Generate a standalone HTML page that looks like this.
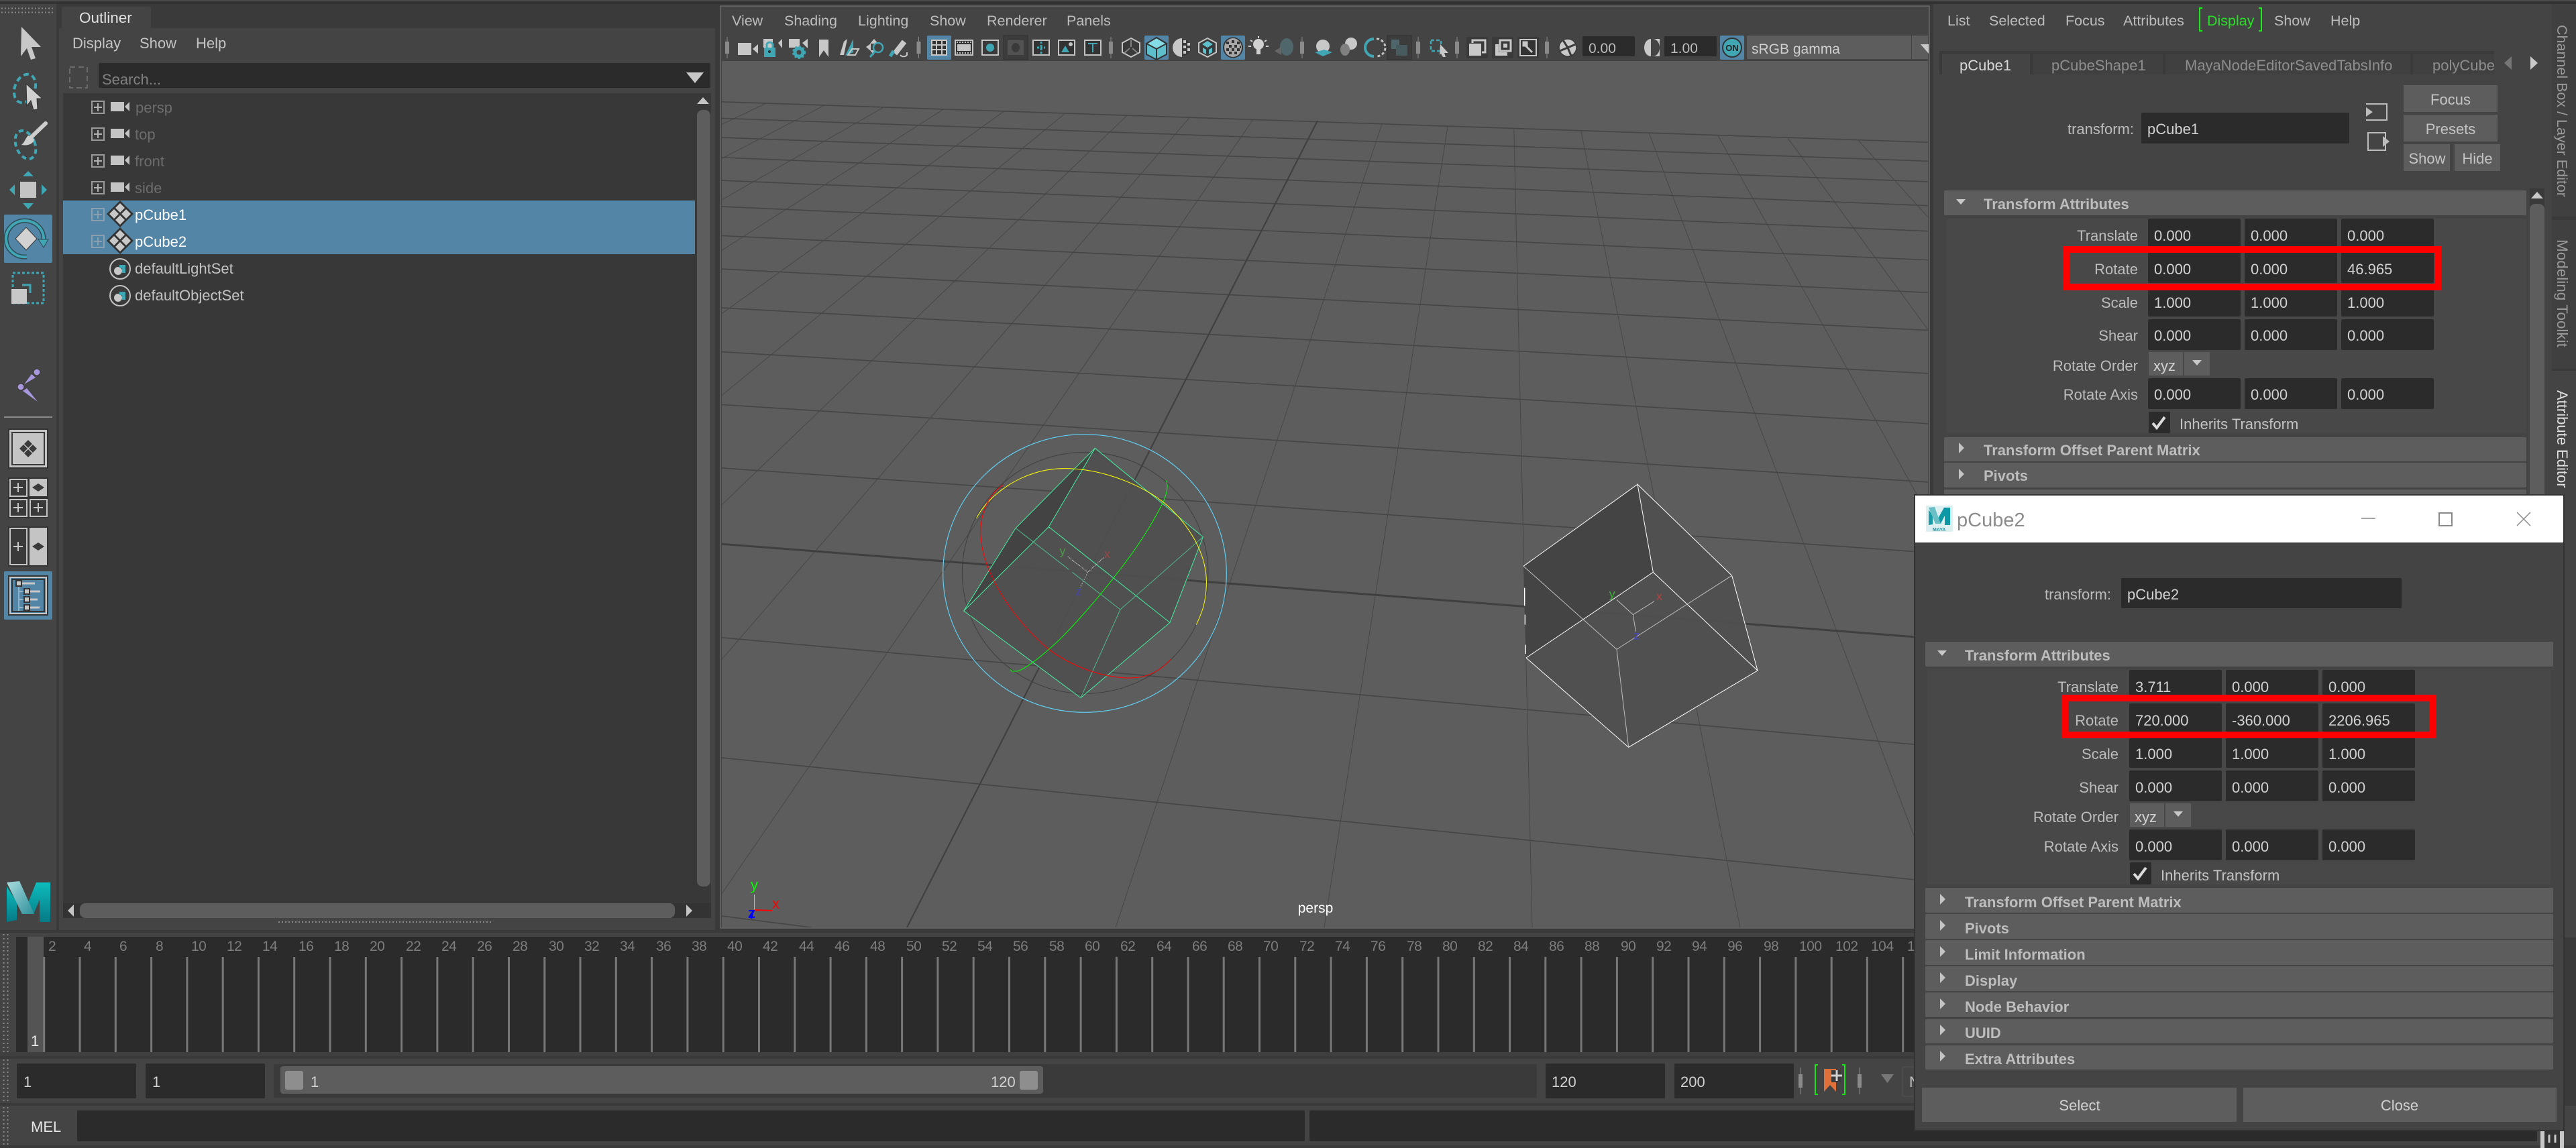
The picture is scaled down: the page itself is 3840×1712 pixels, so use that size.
<!DOCTYPE html>
<html><head><meta charset="utf-8"><title>Maya</title>
<style>
html,body{margin:0;padding:0;background:#3a3a3a;width:3840px;height:1712px;overflow:hidden}
svg{display:block}
text{font-family:"Liberation Sans",sans-serif;font-size:22px;fill:#c4c4c4}
.b{font-weight:bold;fill:#bdbdbd}
.l{text-anchor:end;fill:#bcbcbc}
.v{fill:#d2d2d2}
.d{fill:#6c6c6c}
.m{fill:#bdbdbd;font-size:21.5px}
.t{font-size:21px;letter-spacing:-.5px;fill:#7d7d7d}
.c{text-anchor:middle}
</style></head><body>
<svg width="3840" height="1712" viewBox="0 0 3840 1712" xmlns="http://www.w3.org/2000/svg">
<defs>
<g id="plus"><rect x="1" y="1" width="18" height="18" fill="none" stroke="#9a9a9a" stroke-width="2"/><path d="M10 4v12M4 10h12" stroke="#b0b0b0" stroke-width="2"/></g>
<g id="plusd"><rect x="1" y="1" width="18" height="18" fill="none" stroke="#8aa0b0" stroke-width="2"/><path d="M10 4v12M4 10h12" stroke="#8aa0b0" stroke-width="2"/></g>
<g id="cam"><rect x="0" y="0" width="20" height="14" fill="#c4c4c4"/><path d="M21 7L28 0V14Z" fill="#c4c4c4"/></g>
<g id="dia"><path d="M0 -20L20 0L0 20L-20 0Z" fill="#333"/><path d="M0 -16L7 -9L0 -2L-7 -9ZM0 16L7 9L0 2L-7 9ZM-16 0L-9 -7L-2 0L-9 7ZM16 0L9 -7L2 0L9 7Z" fill="#c8c8c8"/></g>
<g id="setic"><circle r="15" fill="#3a3a3a" stroke="#c4c4c4" stroke-width="2"/><circle cx="-3" cy="3" r="6" fill="#c8c8c8"/><path d="M-1 -6H8V6H3V-1H-1Z" fill="#41a6b4"/></g>
<path id="tr" d="M0 0L8 8L0 16Z" fill="#c4c4c4"/>
<path id="td" d="M0 0H14L7 8Z" fill="#c8c8c8"/>
<g id="sep"><path d="M0 0V32" stroke="#8a8a8a" stroke-width="1"/><rect x="-3" y="7" width="6" height="18" fill="#8a8a8a"/></g>
<linearGradient id="mg" x1="0" y1="0" x2="1" y2="1"><stop offset="0" stop-color="#a9dde0"/><stop offset="1" stop-color="#2e8f9a"/></linearGradient>
<linearGradient id="mg2" x1="0" y1="0" x2="0" y2="1"><stop offset="0" stop-color="#0cbcbc"/><stop offset="1" stop-color="#067a86"/></linearGradient>
<clipPath id="gridclip"><path d="M1074 151.7L2875 212V1383H1074Z"/></clipPath>
<clipPath id="vp"><rect x="1076" y="91" width="1798" height="1292"/></clipPath>
</defs>

<!-- base chrome -->
<rect width="3840" height="1712" fill="#3a3a3a"/>
<rect width="3840" height="2" fill="#4a4a4a"/>
<rect y="2" width="3840" height="4" fill="#333"/>

<!-- left toolbox -->
<rect x="0" y="6" width="84" height="1381" fill="#444"/>
<path d="M2 12.5H80M2 18.5H80" stroke="#8a8a8a" stroke-width="2" stroke-dasharray="2 3"/>
<path d="M32 40L61 70H47L53 87L46 89L40 72L31 84Z" fill="#c8c8c8"/>
<ellipse cx="37" cy="132" rx="15" ry="22" transform="rotate(20 37 132)" fill="none" stroke="#41a6b4" stroke-width="4" stroke-dasharray="8 5"/>
<path d="M39 125L63 147H55L56 163L50 164L46 150L40 158Z" fill="#d0d0d0" stroke="#333"/>
<ellipse cx="38" cy="216" rx="14" ry="22" transform="rotate(-22 38 216)" fill="none" stroke="#41a6b4" stroke-width="4" stroke-dasharray="7 5"/>
<path d="M68 184L46 205" stroke="#cfcfcf" stroke-width="6" stroke-linecap="round"/>
<path d="M42 202L51 208C50 214 42 218 32 216C37 212 38 206 42 202Z" fill="#cfcfcf"/>
<rect x="30" y="271" width="24" height="24" fill="#c4c4c4"/>
<path d="M42 255L50 263H34ZM42 312L50 303H34ZM14 283L22 275V291ZM70 283L62 275V291Z" fill="#41a6b4"/>
<rect x="6" y="320" width="72" height="72" rx="2" fill="#5285a6"/>
<path d="M40 383A28 27 0 1 1 65 357" fill="none" stroke="#2f4a55" stroke-width="7"/>
<path d="M40 383A28 27 0 1 1 65 357" fill="none" stroke="#41a6b4" stroke-width="4"/>
<path d="M39 339L55 356L39 373L23 356Z" fill="#d2d2d2" stroke="#3a3a3a"/>
<path d="M57 357H72L65 369Z" fill="#41a6b4" stroke="#2f4a55"/>
<rect x="19" y="407" width="46" height="45" fill="none" stroke="#41a6b4" stroke-width="3" stroke-dasharray="4 3"/>
<rect x="17" y="431" width="23" height="22" fill="#c8c8c8"/>
<path d="M33 425H45V437" fill="none" stroke="#41a6b4" stroke-width="3"/>
<!-- purple -->
<circle cx="55" cy="555" r="5" fill="#a897dd" stroke="#333"/><circle cx="31" cy="577" r="5" fill="#a897dd" stroke="#333"/>
<path d="M36 573L47 558L53 563ZM34 583L40 579L56 599Z" fill="#a897dd"/>
<rect x="6" y="621" width="72" height="2" fill="#8a8a8a"/>
<rect x="12" y="639" width="60" height="60" fill="#333"/><rect x="14" y="641" width="56" height="56" fill="#c4c4c4"/><rect x="18" y="645" width="48" height="48" fill="#c4c4c4" stroke="#3a3a3a" stroke-width="2"/>
<path d="M42 655L49 662L42 669L35 662ZM42 683L49 676L42 669L35 676ZM28 669L35 662L42 669L35 676ZM56 669L49 662L42 669L49 676Z" fill="#3a3a3a" stroke="#c4c4c4" stroke-width="1.500"/>
<rect x="12" y="712" width="60" height="60" fill="#333"/>
<g fill="#3a3a3a" stroke="#c4c4c4" stroke-width="2"><rect x="15" y="715" width="25" height="25"/><rect x="15" y="745" width="25" height="25"/><rect x="45" y="745" width="25" height="25"/></g>
<rect x="44" y="714" width="26" height="26" fill="#c4c4c4"/>
<path d="M57 721L66 727L57 733L48 727Z" fill="#3a3a3a"/>
<path d="M27 720v14M20 727h14M27 750v14M20 757h14M57 750v14M50 757h14" stroke="#c8c8c8" stroke-width="2"/>
<rect x="12" y="785" width="60" height="60" fill="#333"/>
<rect x="15" y="788" width="25" height="54" fill="#3a3a3a" stroke="#c4c4c4" stroke-width="2"/>
<rect x="44" y="787" width="26" height="56" fill="#c4c4c4"/>
<path d="M57 809L66 815L57 821L48 815Z" fill="#3a3a3a"/>
<path d="M27 808v14M20 815h14" stroke="#c8c8c8" stroke-width="2"/>
<rect x="6" y="852" width="72" height="72" rx="2" fill="#5285a6"/>
<rect x="13" y="859" width="58" height="58" fill="none" stroke="#333" stroke-width="2"/>
<rect x="15" y="861" width="54" height="54" fill="none" stroke="#c8c8c8" stroke-width="2"/>
<rect x="18" y="864" width="48" height="48" fill="none" stroke="#333" stroke-width="2"/>
<path d="M28 875V911M28 882H36M28 894H36M28 906H36" stroke="#8fb2c8" stroke-width="2"/>
<g fill="#c8c8c8" stroke="#333" stroke-width="2"><rect x="24" y="866" width="8" height="8"/><rect x="36" y="878" width="8" height="8"/><rect x="36" y="890" width="8" height="8"/><rect x="36" y="902" width="8" height="8"/></g>
<path d="M33 870H52M45 882H60M45 894H56M45 906H59" stroke="#c8c8c8" stroke-width="3"/>
<!-- M logo -->
<path d="M54 1316H75V1375H59V1342L50 1363L42 1346Z" fill="url(#mg2)"/>
<path d="M10 1322L25 1345V1372L10 1375Z" fill="url(#mg2)"/>
<path d="M10 1316L29 1314L51 1363H33Z" fill="url(#mg)"/>

<!-- outliner -->
<rect x="92" y="10" width="133" height="32" rx="2" fill="#444"/>
<text x="118" y="34" fill="#e0e0e0" style="fill:#e0e0e0;font-size:22.5px">Outliner</text>
<rect x="88" y="42" width="978" height="1345" fill="#444"/>
<text x="108" y="72">Display</text><text x="208" y="72">Show</text><text x="292" y="72">Help</text>
<rect x="104" y="100" width="26" height="31" fill="none" stroke="#6a6a6a" stroke-width="2" stroke-dasharray="8 5"/>
<rect x="147" y="94" width="912" height="37" rx="2" fill="#2b2b2b"/>
<text x="152" y="126" style="fill:#808080">Search...</text>
<path d="M1023 108H1049L1036 124Z" fill="#c8c8c8"/>
<rect x="94" y="139" width="966" height="1208" fill="#383838"/>
<rect x="94" y="299" width="942" height="80" fill="#5285a6"/>
<use href="#plus" x="136" y="150"/><use href="#plus" x="136" y="190"/><use href="#plus" x="136" y="230"/><use href="#plus" x="136" y="270"/>
<use href="#cam" x="165" y="152"/><use href="#cam" x="165" y="192"/><use href="#cam" x="165" y="232"/><use href="#cam" x="165" y="272"/>
<text x="202" y="168" class="d">persp</text><text x="201" y="208" class="d">top</text><text x="201" y="248" class="d">front</text><text x="201" y="288" class="d">side</text>
<use href="#plusd" x="136" y="310"/><use href="#plusd" x="136" y="350"/>
<use href="#dia" x="179" y="319"/><use href="#dia" x="179" y="359"/>
<text x="201" y="328" style="fill:#fff">pCube1</text><text x="201" y="368" style="fill:#fff">pCube2</text>
<use href="#setic" x="179" y="401"/><use href="#setic" x="179" y="441"/>
<text x="201" y="408">defaultLightSet</text><text x="201" y="448">defaultObjectSet</text>
<path d="M1048 145L1057 155H1039Z" fill="#c4c4c4"/>
<rect x="1039" y="164" width="20" height="1158" rx="8" fill="#5d5d5d"/>
<rect x="94" y="1347" width="966" height="22" fill="#333"/>
<path d="M101 1358L110 1349V1367Z" fill="#c4c4c4"/>
<rect x="119" y="1347" width="887" height="22" rx="8" fill="#5d5d5d"/>
<path d="M1032 1358L1023 1349V1367Z" fill="#c4c4c4"/>
<path d="M415 1375H735" stroke="#8a8a8a" stroke-width="2" stroke-dasharray="2 3"/>

<!-- viewport panel -->
<rect x="1074" y="9" width="1802" height="1375" fill="#444" stroke="#7d7d7d" stroke-width="1"/>
<text x="1091" y="38" class="m">View</text><text x="1169" y="38" class="m">Shading</text><text x="1279" y="38" class="m">Lighting</text><text x="1386" y="38" class="m">Show</text><text x="1471" y="38" class="m">Renderer</text><text x="1590" y="38" class="m">Panels</text>
<rect x="1076" y="91" width="1798" height="1292" fill="#5d5d5d"/>
<g clip-path="url(#vp)">
<g clip-path="url(#gridclip)" stroke="#434343" stroke-width="1" opacity=".85" fill="none">
<path d="M2244 -370L-1442.5 1383M2244 -370L-1132 1383M2244 -370L-821.5 1383M2244 -370L-511 1383M2244 -370L-200.5 1383M2244 -370L110 1383M2244 -370L420.5 1383M2244 -370L731 1383M2244 -370L1041.5 1383M2244 -370L1663 1383M2244 -370L1974 1383M2244 -370L2284 1383M2244 -370L2594 1383M2244 -370L2904.5 1383M2244 -370L3215 1383M2244 -370L3525.5 1383M2244 -370L3836 1383M2244 -370L4146.5 1383"/>
</g>
<g stroke="#454545" stroke-width="1.6" fill="none">
<path d="M1074 151.7L2875 212.2M1074 176.3L2875 240.3M1074 205L2875 271M1074 234.8L2875 306.7M1074 269L2875 344.7M1074 308L2875 387.8M1074 351.4L2875 436.4M1074 401L2875 492.6M1074 459L2875 557M1074 524.6L2875 631.8M1074 603.3L2875 719M1074 697.8L2875 824M1076 950.8L2875 1112M1076 1130L2875 1314M1076 1366L1209 1383"/>
</g>
<path d="M1076 811.2L2875 951.5" stroke="#3f3f3f" stroke-width="3" fill="none"/>
<path d="M1964 180L1352 1383" stroke="#404040" stroke-width="2.2" fill="none"/>

<!-- cube 1 -->
<g transform="translate(1380 620) scale(.33333)" fill="none">
<path d="M757 145L402 503L170 873L693 1262L1092 925L1240 542Z" fill="#505050" fill-opacity=".93"/>
<path d="M757 145L402 503L170 873L550 497Z" fill="#434343"/>
<ellipse cx="713" cy="703" rx="550" ry="540" stroke="#3e3e3e" stroke-width="3"/>
<ellipse cx="711" cy="705" rx="634" ry="622" stroke="#5fd0f5" stroke-width="3.5"/>
<g stroke="#43f0a0" stroke-width="3">
<path d="M757 145L402 503L170 873L693 1262L1092 925L1240 542Z"/>
<path d="M757 145L550 497L1092 925M550 497L170 873"/>
</g>
<g stroke="#4fb78b" stroke-width="3">
<path d="M402 503L640 688M655 700L870 867L1240 542M870 867L693 1262"/>
</g>
<path d="M227 458C270 370 420 236 620 236C800 236 1000 320 1100 420C1200 520 1260 640 1255 760C1252 840 1235 880 1210 935" stroke="#ffff00" stroke-width="3"/>
<path d="M345 310C270 360 240 460 246 540C256 700 380 900 550 1045C680 1140 830 1180 940 1172C1010 1165 1060 1130 1095 1090" stroke="#ff0000" stroke-width="3"/>
<path d="M1075 290C1085 310 1082 340 1060 390C1010 490 940 600 840 725C760 830 660 940 600 1000C510 1085 440 1135 410 1143H385L378 1135" stroke="#00ff00" stroke-width="3"/>
<path d="M635 630L725 700M795 635L725 700" stroke="#c8c8c8" stroke-width="3" stroke-dasharray="5 3"/>
<path d="M725 700L690 770" stroke="#c8c8c8" stroke-width="3" stroke-dasharray="5 6"/>
<text x="598" y="622" style="fill:#4a9a4a;font-size:54px">y</text>
<text x="798" y="636" style="fill:#a04545;font-size:54px">x</text>
<text x="670" y="803" style="fill:#4545b0;font-size:54px">z</text>
</g>

<!-- cube 2 -->
<g transform="translate(2230 700) scale(.33333)" fill="none">
<path d="M633 67L123 433L135 843L593 1243L1170 900L1055 475Z" fill="#505050" fill-opacity=".93"/>
<path d="M633 67L123 433L135 843L703 460Z" fill="#444"/>
<g stroke="#fff" stroke-width="3">
<path d="M633 67L123 433M135 843L593 1243L1170 900L1055 475L633 67L703 460L1170 900M703 460L135 843"/>
<path d="M128 530V610M130 650V695M133 785V825" stroke-width="4"/>
</g>
<g stroke="#bdbdbd" stroke-width="3">
<path d="M123 433L540 805L593 1243M540 805L1055 475"/>
<path d="M540 583L613 650L708 590M613 650L625 725"/>
</g>
<text x="506" y="575" style="fill:#3faf3f;font-size:54px">y</text>
<text x="717" y="585" style="fill:#b04545;font-size:54px">x</text>
<text x="615" y="760" style="fill:#4747c0;font-size:54px">z</text>
</g>
</g>
<!-- axis marker -->
<path d="M1124.5 1334V1357" stroke="#bbb" stroke-width="1"/><path d="M1124.5 1357L1151 1358" stroke="#f00" stroke-width="2"/><path d="M1123 1358L1120 1370" stroke="#00f" stroke-width="2"/>
<text x="1119" y="1327" style="fill:#0f0;font-size:22px">y</text>
<text x="1151" y="1355" style="fill:#f00;font-size:22px">x</text>
<text x="1115" y="1369" style="fill:#00f;font-size:22px;font-weight:bold">z</text>
<text x="1961" y="1361" class="c" style="fill:#fff;font-size:21px">persp</text>

<!-- viewport toolbar icons -->
<use href="#sep" x="1084" y="55"/>
<g transform="translate(1100 64)"><rect width="20" height="18" fill="#c8c8c8"/><path d="M22 9L30 2V16Z" fill="#c8c8c8"/></g>
<g transform="translate(1138 58)"><rect width="14" height="13" fill="#c8c8c8"/><rect x="1" y="13" width="17" height="14" fill="#41a6b4"/><path d="M5 13V8a5 5 0 0 1 9 0v5" fill="none" stroke="#41a6b4" stroke-width="3"/><path d="M22 6L28 0V14Z" fill="#c8c8c8"/><circle cx="9" cy="19" r="2" fill="#333"/></g>
<g transform="translate(1176 58)"><rect width="16" height="13" fill="#c8c8c8"/><path d="M20 6L28 0V14Z" fill="#c8c8c8"/><circle cx="15" cy="20" r="6" fill="none" stroke="#41a6b4" stroke-width="5"/><circle cx="15" cy="20" r="9" fill="none" stroke="#41a6b4" stroke-width="2" stroke-dasharray="3 3"/></g>
<path d="M1221 59H1235V85L1228 75L1221 85Z" fill="#c8c8c8"/>
<path d="M1272 58V78L1260 83Z" fill="#41a6b4"/><path d="M1252 82L1258 62L1263 58L1258 82Z" fill="#c8c8c8"/><path d="M1264 82L1270 73H1280L1275 82Z" fill="none" stroke="#c8c8c8" stroke-width="2"/>
<path d="M1303 58L1309 65H1297ZM1291 70L1298 65V76ZM1303 82L1297 75H1303Z" fill="#c8c8c8"/><circle cx="1309" cy="71" r="7" fill="none" stroke="#41a6b4" stroke-width="2.5"/><path d="M1304 77L1297 85" stroke="#41a6b4" stroke-width="3"/>
<path d="M1348 62L1334 80" stroke="#c8c8c8" stroke-width="8"/><path d="M1332 76L1327 84" stroke="#41a6b4" stroke-width="5"/><path d="M1342 82a6 5 0 0 0 10 0V78" fill="none" stroke="#c8c8c8" stroke-width="2"/>
<use href="#sep" x="1369.5" y="55"/>
<rect x="1382" y="53" width="36" height="36" rx="2" fill="#5285a6"/>
<rect x="1389" y="60" width="22" height="22" fill="#333" stroke="#c8c8c8" stroke-width="2"/><path d="M1389 67H1411M1389 74H1411M1396 60V82M1404 60V82" stroke="#c8c8c8" stroke-width="2"/>
<rect x="1424" y="60" width="26" height="22" fill="#333" stroke="#c4c4c4" stroke-width="2"/><rect x="1427" y="66" width="20" height="10" fill="#c4c4c4"/><path d="M1426 63H1448M1426 79H1448" stroke="#c4c4c4" stroke-width="2" stroke-dasharray="2 2"/>
<rect x="1464" y="60" width="24" height="22" fill="#3a3a3a" stroke="#c4c4c4" stroke-width="2"/><circle cx="1476" cy="71" r="6" fill="#41a6b4"/>
<rect x="1496" y="53" width="36" height="36" fill="#3c3c3c" stroke="#2f2f2f"/><rect x="1502" y="60" width="24" height="22" fill="#525252"/><ellipse cx="1514" cy="71" rx="6" ry="7" fill="#3a3a3a"/>
<rect x="1540" y="60" width="24" height="22" fill="#333" stroke="#c4c4c4" stroke-width="2"/><path d="M1552 62V80M1546 71H1558" stroke="#41a6b4" stroke-width="3" stroke-dasharray="3 2"/>
<rect x="1578" y="60" width="24" height="22" fill="#333" stroke="#c4c4c4" stroke-width="2"/><path d="M1582 78L1588 68L1594 78Z" fill="#41a6b4"/><circle cx="1596" cy="66" r="3" fill="#c4c4c4"/>
<rect x="1617" y="60" width="24" height="22" fill="#333" stroke="#c4c4c4" stroke-width="2"/><path d="M1622 65H1636M1629 65V78" stroke="#41a6b4" stroke-width="2"/>
<use href="#sep" x="1656" y="55"/>
<path d="M1686 57L1699 64V78L1686 85L1673 78V64Z" fill="#3a3a3a" stroke="#c4c4c4" stroke-width="2"/><path d="M1686 60V70M1676 79L1684 72M1696 79L1688 72" stroke="#808080" stroke-width="2"/>
<rect x="1706" y="53" width="36" height="36" rx="2" fill="#5285a6"/>
<path d="M1724 56L1739 65V81L1724 89L1709 81V65Z" fill="#5dbfcb" stroke="#333" stroke-width="2"/><path d="M1724 56L1739 65L1724 73L1709 65Z" fill="#84dbe4" stroke="#333" stroke-width="2"/><path d="M1724 73V89" stroke="#333" stroke-width="2"/>
<circle cx="1762" cy="71" r="14" fill="#c8c8c8"/><path d="M1762 57a14 14 0 0 1 0 28Z" fill="#3a3a3a"/><path d="M1764 60h4v4h-4zM1770 64h4v4h-4zM1764 68h4v4h-4zM1770 72h4v4h-4zM1764 76h4v4h-4z" fill="#c8c8c8"/>
<path d="M1800 57L1813 64V78L1800 85L1787 78V64Z" fill="#3a3a3a" stroke="#c4c4c4" stroke-width="2"/><path d="M1800 61L1808 66L1800 71L1792 66Z" fill="#5dbfcb"/><path d="M1793 71L1798 74V81L1793 78ZM1807 71L1802 74V81L1807 78Z" fill="#5dbfcb"/>
<rect x="1820" y="53" width="36" height="36" rx="2" fill="#5285a6"/>
<ellipse cx="1838" cy="71" rx="15" ry="15.500" fill="#333"/>
<ellipse cx="1838" cy="71" rx="13" ry="14" fill="#a8a8a8"/>
<path d="M1828 62h4v4h-4zM1836 60h4v4h-4zM1844 62h4v4h-4zM1832 67h4v4h-4zM1840 67h4v4h-4zM1848 68h2v4h-2zM1828 72h4v4h-4zM1836 72h4v4h-4zM1844 72h4v4h-4zM1832 77h4v4h-4zM1840 77h4v4h-4z" fill="#333"/>
<circle cx="1876" cy="66" r="8" fill="#d0d0d0"/><rect x="1873" y="72" width="6" height="9" fill="#d0d0d0"/><path d="M1876 54V57M1864 60L1867 62M1888 60L1885 62M1861 69H1865M1887 69H1891" stroke="#d0d0d0" stroke-width="2"/>
<ellipse cx="1918" cy="70" rx="10" ry="13" fill="#4f666b"/><path d="M1900 76L1910 70V82Z" fill="#666"/>
<use href="#sep" x="1941" y="55"/>
<circle cx="1972" cy="69" r="10" fill="#c8c8c8"/><path d="M1960 78L1972 84L1986 78L1974 74Z" fill="#41a6b4"/>
<circle cx="2014" cy="65" r="9" fill="#c8c8c8"/><ellipse cx="2005" cy="74" rx="7" ry="9" fill="#808080"/>
<path d="M2048 58a13 13 0 0 0 0 26" fill="none" stroke="#41a6b4" stroke-width="4"/><path d="M2052 58a13 13 0 0 1 0 26" fill="none" stroke="#c4c4c4" stroke-width="3" stroke-dasharray="4 3"/>
<rect x="2068" y="53" width="36" height="36" fill="#3c3c3c" stroke="#2f2f2f"/><rect x="2074" y="59" width="12" height="14" fill="#4f666b"/><rect x="2081" y="67" width="17" height="16" fill="#475a5e"/>
<use href="#sep" x="2114" y="55"/>
<rect x="2133" y="60" width="15" height="16" fill="none" stroke="#41a6b4" stroke-width="2.500" stroke-dasharray="5 3"/><path d="M2147 66L2159 79H2153L2155 85L2151 85L2148 80L2146 82Z" fill="#c8c8c8"/>
<use href="#sep" x="2172" y="55"/>
<rect x="2186" y="55" width="32" height="32" rx="2" fill="#3a3a3a"/><rect x="2190" y="65" width="18" height="18" fill="#c8c8c8"/><path d="M2195 64V60H2214V78H2209" fill="none" stroke="#c8c8c8" stroke-width="3"/>
<rect x="2224" y="55" width="32" height="32" rx="2" fill="#3a3a3a"/><path d="M2229 66V83H2247V78H2234V66Z" fill="#c8c8c8"/><rect x="2236" y="60" width="16" height="16" fill="none" stroke="#c8c8c8" stroke-width="3"/><rect x="2241" y="65" width="6" height="6" fill="#c8c8c8"/>
<rect x="2262" y="55" width="32" height="32" rx="2" fill="#3a3a3a"/><rect x="2266" y="59" width="24" height="24" fill="#333" stroke="#c8c8c8" stroke-width="2"/><path d="M2271 65L2284 78M2271 63H2276V68H2271Z" stroke="#c8c8c8" stroke-width="3" fill="#c8c8c8"/>
<use href="#sep" x="2306" y="55"/>
<circle cx="2337" cy="71" r="13" fill="#c8c8c8" stroke="#3a3a3a" stroke-width="1.500"/><path d="M2337 71L2330 60M2337 71L2349 66M2337 71L2342 83M2337 71L2325 76" stroke="#3a3a3a" stroke-width="3"/>
<rect x="2359" y="54" width="78" height="30" rx="2" fill="#2b2b2b"/><text x="2368" y="79" class="l" style="text-anchor:start;font-size:21px">0.00</text>
<path d="M2461 58a10 13 0 0 0 0 26Z" fill="#c8c8c8"/><path d="M2464 58h10v26h-10a10 13 0 0 0 0-26Z" fill="#c8c8c8"/>
<rect x="2481" y="54" width="78" height="30" rx="2" fill="#2b2b2b"/><text x="2490" y="79" class="l" style="text-anchor:start;font-size:21px">1.00</text>
<rect x="2564" y="53" width="36" height="36" rx="2" fill="#5285a6"/><circle cx="2582" cy="71" r="14" fill="#41a6b4" stroke="#333" stroke-width="2"/><text x="2582" y="76" class="c" style="fill:#222;font-size:13px;font-weight:bold">ON</text>
<rect x="2604" y="53" width="245" height="35" rx="2" fill="#5d5d5d"/><rect x="2850" y="53" width="24" height="35" fill="#5d5d5d"/>
<text x="2611" y="80" style="font-size:21px;fill:#cfcfcf">sRGB gamma</text><path d="M2863 66H2875V80Z" fill="#c8c8c8"/>

<!-- attribute editor -->
<rect x="2882" y="6" width="922" height="1381" fill="#444"/>
<text x="2903" y="38" class="m">List</text><text x="2965" y="38" class="m">Selected</text><text x="3079" y="38" class="m">Focus</text><text x="3165" y="38" class="m">Attributes</text>
<path d="M3283 12H3279V46H3283M3367 12H3371V46H3367" fill="none" stroke="#1de91d" stroke-width="2"/>
<text x="3290" y="38" style="fill:#26e026;font-size:21.5px">Display</text><text x="3390" y="38" class="m">Show</text><text x="3474" y="38" class="m">Help</text>
<rect x="2891" y="76" width="827" height="35" fill="#3a3a3a"/>
<rect x="2895" y="80" width="131" height="31" fill="#444"/>
<rect x="3030" y="80" width="194" height="31" fill="#404040"/><rect x="3228" y="80" width="365" height="31" fill="#404040"/><rect x="3597" y="80" width="121" height="31" fill="#404040"/>
<text x="2921" y="105" style="fill:#d8d8d8">pCube1</text><text x="3058" y="105" style="fill:#8e8e8e">pCubeShape1</text><text x="3257" y="105" style="fill:#8e8e8e">MayaNodeEditorSavedTabsInfo</text>
<svg x="3597" y="76" width="121" height="35"><text x="29" y="29" style="fill:#8e8e8e">polyCubeNode</text></svg>
<path d="M3744 84L3733 94L3744 104Z" fill="#767676"/><path d="M3772 84L3783 94L3772 104Z" fill="#c8c8c8"/>
<text x="3181" y="200" class="l">transform:</text>
<rect x="3192" y="168" width="310" height="46" rx="2" fill="#2b2b2b"/><text x="3201" y="200" class="v">pCube1</text>
<path d="M3527 155H3558V179H3527" fill="none" stroke="#bdbdbd" stroke-width="2"/><path d="M3527 160L3537 167L3527 174Z" fill="#bdbdbd"/>
<path d="M3530 198H3556V224H3530Z" fill="none" stroke="#bdbdbd" stroke-width="2"/><path d="M3552 203L3562 211L3552 219Z" fill="#bdbdbd"/>
<g fill="#5d5d5d"><rect x="3583" y="127" width="140" height="40"/><rect x="3583" y="171" width="140" height="40"/><rect x="3583" y="215" width="69" height="40"/><rect x="3659" y="215" width="68" height="40"/></g>
<text x="3653" y="156" class="c">Focus</text><text x="3653" y="200" class="c">Presets</text><text x="3618" y="244" class="c">Show</text><text x="3693" y="244" class="c">Hide</text>
<rect x="2898" y="284" width="868" height="37" rx="2" fill="#5d5d5d"/><use href="#td" x="2916" y="297"/>
<text x="2957" y="312" class="b">Transform Attributes</text>
<rect x="2902" y="326" width="864" height="320" fill="#484848"/>
<rect x="3771" y="281" width="22" height="1100" fill="#3a3a3a"/><path d="M3782 286L3791 296H3773Z" fill="#c8c8c8"/><rect x="3771" y="304" width="22" height="1100" rx="8" fill="#5d5d5d"/>
<g fill="#2b2b2b">
<rect x="3202" y="326" width="138" height="46" rx="2"/><rect x="3346" y="326" width="138" height="46" rx="2"/><rect x="3490" y="326" width="138" height="46" rx="2"/>
<rect x="3202" y="376" width="138" height="46" rx="2"/><rect x="3346" y="376" width="138" height="46" rx="2"/><rect x="3490" y="376" width="138" height="46" rx="2"/>
<rect x="3202" y="426" width="138" height="46" rx="2"/><rect x="3346" y="426" width="138" height="46" rx="2"/><rect x="3490" y="426" width="138" height="46" rx="2"/>
<rect x="3202" y="476" width="138" height="46" rx="2"/><rect x="3346" y="476" width="138" height="46" rx="2"/><rect x="3490" y="476" width="138" height="46" rx="2"/>
<rect x="3202" y="564" width="138" height="46" rx="2"/><rect x="3346" y="564" width="138" height="46" rx="2"/><rect x="3490" y="564" width="138" height="46" rx="2"/>
<rect x="3203" y="614" width="32" height="32" rx="2"/>
</g>
<text x="3187" y="359" class="l">Translate</text><text x="3187" y="409" class="l">Rotate</text><text x="3187" y="459" class="l">Scale</text><text x="3187" y="508" class="l">Shear</text><text x="3187" y="553" class="l">Rotate Order</text><text x="3187" y="596" class="l">Rotate Axis</text>
<text x="3211" y="359" class="v">0.000</text><text x="3355" y="359" class="v">0.000</text><text x="3499" y="359" class="v">0.000</text>
<text x="3211" y="409" class="v">0.000</text><text x="3355" y="409" class="v">0.000</text><text x="3499" y="409" class="v">46.965</text>
<text x="3211" y="459" class="v">1.000</text><text x="3355" y="459" class="v">1.000</text><text x="3499" y="459" class="v">1.000</text>
<text x="3211" y="508" class="v">0.000</text><text x="3355" y="508" class="v">0.000</text><text x="3499" y="508" class="v">0.000</text>
<text x="3211" y="596" class="v">0.000</text><text x="3355" y="596" class="v">0.000</text><text x="3499" y="596" class="v">0.000</text>
<rect x="3203" y="525" width="51" height="35" fill="#5d5d5d"/><rect x="3256" y="525" width="38" height="35" fill="#5d5d5d"/>
<text x="3210" y="553" class="v">xyz</text><use href="#td" x="3268" y="537"/>
<path d="M3209 631L3215 638L3227 622" fill="none" stroke="#dcdcdc" stroke-width="4"/>
<text x="3249" y="640">Inherits Transform</text>
<rect x="2898" y="652" width="868" height="36" rx="2" fill="#5d5d5d"/><rect x="2898" y="690" width="868" height="37" rx="2" fill="#5d5d5d"/><rect x="2898" y="730" width="868" height="37" rx="2" fill="#5d5d5d"/>
<use href="#tr" x="2920" y="660"/><use href="#tr" x="2920" y="699"/>
<text x="2957" y="679" class="b">Transform Offset Parent Matrix</text><text x="2957" y="717" class="b">Pivots</text>
<rect x="3080" y="372" width="554" height="56" fill="none" stroke="#f00" stroke-width="10"/>

<!-- right tabs -->
<rect x="3804" y="6" width="36" height="1381" fill="#3a3a3a"/>
<rect x="3804" y="6" width="36" height="317" fill="#404040"/><rect x="3804" y="328" width="36" height="222" fill="#404040"/><rect x="3804" y="553" width="36" height="845" fill="#444"/>
<text transform="translate(3812 37) rotate(90)" style="fill:#9a9a9a;font-size:21.5px">Channel Box / Layer Editor</text>
<text transform="translate(3812 357) rotate(90)" style="fill:#9a9a9a;font-size:22.5px">Modeling Toolkit</text>
<text transform="translate(3812 582) rotate(90)" style="fill:#e0e0e0;font-size:22px">Attribute Editor</text>

<!-- timeline -->
<rect x="0" y="1391" width="2860" height="184" fill="#444"/>
<path d="M5.500 1393V1570M11.500 1393V1570" stroke="#8a8a8a" stroke-width="2" stroke-dasharray="2 4"/>
<rect x="24" y="1397" width="2836" height="172" fill="#2b2b2b"/>
<rect x="41" y="1397" width="24" height="172" fill="#545454"/>
<text x="46" y="1560" style="fill:#eee">1</text>
<path stroke="#777" stroke-width="3" fill="none" d="M65.700 1427V1569M119 1427V1569M172.300 1427V1569M225.600 1427V1569M278.900 1427V1569M332.200 1427V1569M385.400 1427V1569M438.700 1427V1569M492 1427V1569M545.300 1427V1569M598.600 1427V1569M651.900 1427V1569M705.200 1427V1569M758.500 1427V1569M811.800 1427V1569M865 1427V1569M918.300 1427V1569M971.600 1427V1569M1024.900 1427V1569M1078.200 1427V1569M1131.500 1427V1569M1184.800 1427V1569M1238.100 1427V1569M1291.400 1427V1569M1344.600 1427V1569M1397.900 1427V1569M1451.200 1427V1569M1504.500 1427V1569M1557.800 1427V1569M1611.100 1427V1569M1664.400 1427V1569M1717.700 1427V1569M1771 1427V1569M1824.200 1427V1569M1877.500 1427V1569M1930.800 1427V1569M1984.100 1427V1569M2037.400 1427V1569M2090.700 1427V1569M2144 1427V1569M2197.300 1427V1569M2250.600 1427V1569M2303.800 1427V1569M2357.100 1427V1569M2410.400 1427V1569M2463.700 1427V1569M2517 1427V1569M2570.300 1427V1569M2623.600 1427V1569M2676.900 1427V1569M2730.200 1427V1569M2783.400 1427V1569M2836.700 1427V1569"/>
<g>
<text class="t" x="72" y="1418">2</text><text class="t" x="125" y="1418">4</text><text class="t" x="178" y="1418">6</text><text class="t" x="232" y="1418">8</text><text class="t" x="285" y="1418">10</text><text class="t" x="338" y="1418">12</text><text class="t" x="391" y="1418">14</text><text class="t" x="445" y="1418">16</text><text class="t" x="498" y="1418">18</text><text class="t" x="551" y="1418">20</text><text class="t" x="605" y="1418">22</text><text class="t" x="658" y="1418">24</text><text class="t" x="711" y="1418">26</text><text class="t" x="764" y="1418">28</text><text class="t" x="818" y="1418">30</text><text class="t" x="871" y="1418">32</text><text class="t" x="924" y="1418">34</text><text class="t" x="978" y="1418">36</text><text class="t" x="1031" y="1418">38</text><text class="t" x="1084" y="1418">40</text><text class="t" x="1137" y="1418">42</text><text class="t" x="1191" y="1418">44</text><text class="t" x="1244" y="1418">46</text><text class="t" x="1297" y="1418">48</text><text class="t" x="1351" y="1418">50</text><text class="t" x="1404" y="1418">52</text><text class="t" x="1457" y="1418">54</text><text class="t" x="1510" y="1418">56</text><text class="t" x="1564" y="1418">58</text><text class="t" x="1617" y="1418">60</text><text class="t" x="1670" y="1418">62</text><text class="t" x="1724" y="1418">64</text><text class="t" x="1777" y="1418">66</text><text class="t" x="1830" y="1418">68</text><text class="t" x="1883" y="1418">70</text><text class="t" x="1937" y="1418">72</text><text class="t" x="1990" y="1418">74</text><text class="t" x="2043" y="1418">76</text><text class="t" x="2097" y="1418">78</text><text class="t" x="2150" y="1418">80</text><text class="t" x="2203" y="1418">82</text><text class="t" x="2256" y="1418">84</text><text class="t" x="2309" y="1418">86</text><text class="t" x="2362" y="1418">88</text><text class="t" x="2416" y="1418">90</text><text class="t" x="2469" y="1418">92</text><text class="t" x="2522" y="1418">94</text><text class="t" x="2575" y="1418">96</text><text class="t" x="2629" y="1418">98</text><text class="t" x="2682" y="1418">100</text><text class="t" x="2736" y="1418">102</text><text class="t" x="2789" y="1418">104</text><text class="t" x="2843" y="1418">106</text>
</g>

<!-- range row -->
<rect x="0" y="1569" width="2860" height="6" fill="#3f3f3f"/>
<rect x="0" y="1579" width="2860" height="66" fill="#444"/>
<path d="M5.500 1580V1645M11.500 1580V1645" stroke="#8a8a8a" stroke-width="2" stroke-dasharray="2 4"/>
<rect x="25" y="1586" width="178" height="52" rx="2" fill="#2b2b2b"/><rect x="217" y="1586" width="178" height="52" rx="2" fill="#2b2b2b"/>
<text x="35" y="1621" class="v">1</text><text x="227" y="1621" class="v">1</text>
<rect x="408" y="1587" width="1883" height="50" fill="#3a3a3a"/>
<rect x="418" y="1590" width="1137" height="41" rx="4" fill="#5d5d5d"/>
<rect x="425" y="1597" width="27" height="28" rx="3" fill="#8e8e8e"/>
<text x="463" y="1621" class="v">1</text><text x="1477" y="1621" class="v">120</text>
<rect x="1520" y="1597" width="27" height="28" rx="3" fill="#8e8e8e"/>
<rect x="2304" y="1586" width="178" height="52" rx="2" fill="#2b2b2b"/><rect x="2496" y="1586" width="178" height="52" rx="2" fill="#2b2b2b"/>
<text x="2313" y="1621" class="v">120</text><text x="2505" y="1621" class="v">200</text>
<path d="M2684 1592V1632" stroke="#8a8a8a"/><rect x="2681" y="1602" width="6" height="20" fill="#8a8a8a"/>
<path d="M2710 1588H2706V1632H2710M2746 1588H2750V1632H2746" fill="none" stroke="#17e617" stroke-width="2"/>
<path d="M2719 1594H2737V1628L2728 1618L2719 1628Z" fill="#e0703a"/>
<rect x="2730" y="1596" width="14" height="18" fill="#3a3a3a"/><path d="M2738 1596V1612M2730 1604H2746" stroke="#d0d0d0" stroke-width="3"/>
<path d="M2772 1592V1632" stroke="#8a8a8a"/><rect x="2769" y="1602" width="6" height="20" fill="#8a8a8a"/>
<path d="M2804 1602H2823L2813.500 1615Z" fill="#777"/>
<rect x="2836" y="1591" width="40" height="44" rx="3" fill="none" stroke="#555"/>
<text x="2846" y="1621">N</text>

<!-- command line -->
<rect x="0" y="1649" width="3840" height="59" fill="#444"/>
<path d="M5.500 1651V1708M11.500 1651V1708" stroke="#8a8a8a" stroke-width="2" stroke-dasharray="2 4"/>
<text x="46" y="1688" style="fill:#e6e6e6">MEL</text>
<rect x="115" y="1656" width="1830" height="46" rx="2" fill="#2b2b2b"/>
<rect x="1952" y="1656" width="1830" height="46" rx="2" fill="#2b2b2b"/>
<rect x="3787" y="1680" width="35" height="32" fill="#c8c8c8"/><rect x="3793" y="1685" width="23" height="27" fill="#333"/><path d="M3800 1692V1704M3809 1692V1704" stroke="#c8c8c8" stroke-width="3"/>

<!-- floating window pCube2 -->
<rect x="2853" y="737" width="970" height="950" fill="#333"/>
<rect x="2855" y="809" width="966" height="876" fill="#444"/>
<rect x="2855" y="739" width="966" height="70" fill="#fff"/>
<rect x="2871" y="754" width="40" height="39" fill="#dcf0f2"/>
<path d="M2898 757H2907V783H2899V769L2893 781L2889 773Z" fill="#0c99a5"/>
<path d="M2875 760L2881 769V782L2875 783Z" fill="#1a9aa5"/>
<path d="M2875 757L2884 756L2893 781H2885Z" fill="#6abfc6"/>
<text x="2881" y="792" style="font-size:7px;font-weight:bold;fill:#2a8e99">MAYA</text>
<text x="2917" y="785" style="fill:#8c8c8c;font-size:29px">pCube2</text>
<path d="M3520 773H3541" stroke="#8a8a8a" stroke-width="1.500"/>
<rect x="3636" y="765" width="19" height="19" fill="none" stroke="#8a8a8a" stroke-width="2"/>
<path d="M3752 764L3772 784M3772 764L3752 784" stroke="#8a8a8a" stroke-width="1.500"/>
<text x="3147" y="894" class="l">transform:</text>
<rect x="3162" y="862" width="418" height="45" rx="2" fill="#2b2b2b"/><text x="3171" y="894" class="v">pCube2</text>
<rect x="2870" y="957" width="936" height="37" rx="2" fill="#5d5d5d"/><use href="#td" x="2888" y="970"/>
<text x="2929" y="985" class="b">Transform Attributes</text>
<rect x="2873" y="999" width="929" height="320" fill="#484848"/>
<g fill="#2b2b2b">
<rect x="3174" y="999" width="138" height="46" rx="2"/><rect x="3318" y="999" width="138" height="46" rx="2"/><rect x="3462" y="999" width="138" height="46" rx="2"/>
<rect x="3174" y="1049" width="138" height="46" rx="2"/><rect x="3318" y="1049" width="138" height="46" rx="2"/><rect x="3462" y="1049" width="138" height="46" rx="2"/>
<rect x="3174" y="1099" width="138" height="46" rx="2"/><rect x="3318" y="1099" width="138" height="46" rx="2"/><rect x="3462" y="1099" width="138" height="46" rx="2"/>
<rect x="3174" y="1149" width="138" height="46" rx="2"/><rect x="3318" y="1149" width="138" height="46" rx="2"/><rect x="3462" y="1149" width="138" height="46" rx="2"/>
<rect x="3174" y="1237" width="138" height="46" rx="2"/><rect x="3318" y="1237" width="138" height="46" rx="2"/><rect x="3462" y="1237" width="138" height="46" rx="2"/>
<rect x="3175" y="1286" width="32" height="33" rx="2"/>
</g>
<text x="3158" y="1032" class="l">Translate</text><text x="3158" y="1082" class="l">Rotate</text><text x="3158" y="1132" class="l">Scale</text><text x="3158" y="1182" class="l">Shear</text><text x="3158" y="1226" class="l">Rotate Order</text><text x="3158" y="1270" class="l">Rotate Axis</text>
<text x="3183" y="1032" class="v">3.711</text><text x="3327" y="1032" class="v">0.000</text><text x="3471" y="1032" class="v">0.000</text>
<text x="3183" y="1082" class="v">720.000</text><text x="3327" y="1082" class="v">-360.000</text><text x="3471" y="1082" class="v">2206.965</text>
<text x="3183" y="1132" class="v">1.000</text><text x="3327" y="1132" class="v">1.000</text><text x="3471" y="1132" class="v">1.000</text>
<text x="3183" y="1182" class="v">0.000</text><text x="3327" y="1182" class="v">0.000</text><text x="3471" y="1182" class="v">0.000</text>
<text x="3183" y="1270" class="v">0.000</text><text x="3327" y="1270" class="v">0.000</text><text x="3471" y="1270" class="v">0.000</text>
<rect x="3175" y="1198" width="51" height="35" fill="#5d5d5d"/><rect x="3228" y="1198" width="38" height="35" fill="#5d5d5d"/>
<text x="3182" y="1226" class="v">xyz</text><use href="#td" x="3240" y="1210"/>
<path d="M3181 1303L3187 1310L3199 1294" fill="none" stroke="#dcdcdc" stroke-width="4"/>
<text x="3221" y="1313">Inherits Transform</text>
<rect x="3078" y="1041" width="549" height="55" fill="none" stroke="#f00" stroke-width="10"/>
<g fill="#5d5d5d">
<rect x="2870" y="1324" width="936" height="37" rx="2"/><rect x="2870" y="1363" width="936" height="37" rx="2"/><rect x="2870" y="1402" width="936" height="37" rx="2"/><rect x="2870" y="1441" width="936" height="37" rx="2"/><rect x="2870" y="1480" width="936" height="37" rx="2"/><rect x="2870" y="1520" width="936" height="36" rx="2"/><rect x="2870" y="1559" width="936" height="36" rx="2"/>
</g>
<use href="#tr" x="2892" y="1333"/><use href="#tr" x="2892" y="1372"/><use href="#tr" x="2892" y="1411"/><use href="#tr" x="2892" y="1450"/><use href="#tr" x="2892" y="1489"/><use href="#tr" x="2892" y="1528"/><use href="#tr" x="2892" y="1567"/>
<text x="2929" y="1353" class="b">Transform Offset Parent Matrix</text><text x="2929" y="1392" class="b">Pivots</text><text x="2929" y="1431" class="b">Limit Information</text><text x="2929" y="1470" class="b">Display</text><text x="2929" y="1509" class="b">Node Behavior</text><text x="2929" y="1548" class="b">UUID</text><text x="2929" y="1587" class="b">Extra Attributes</text>
<rect x="2865" y="1622" width="469" height="51" fill="#5d5d5d"/><rect x="3344" y="1622" width="467" height="51" fill="#5d5d5d"/>
<text x="3100" y="1656" class="c" style="fill:#d0d0d0">Select</text><text x="3577" y="1656" class="c" style="fill:#d0d0d0">Close</text>
</svg>
</body></html>
